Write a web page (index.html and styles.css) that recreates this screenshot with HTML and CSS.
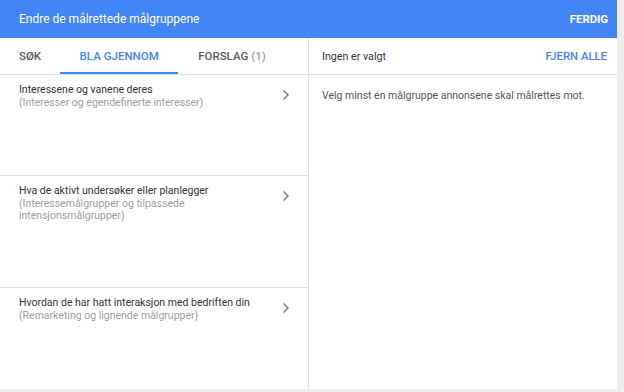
FILE: index.html
```html
<!DOCTYPE html>
<html>
<head>
<meta charset="utf-8">
<link rel="stylesheet" href="styles.css">
</head>
<body>
<div class="dialog">
  <header class="header">
    <div class="title">Endre de målrettede målgruppene</div>
    <div class="done">FERDIG</div>
  </header>
  <div class="body">
    <div class="left">
      <nav class="tabs">
        <div class="tab">SØK</div>
        <div class="tab active">BLA GJENNOM</div>
        <div class="tab">FORSLAG <span class="count">(1)</span></div>
      </nav>
      <div class="row r1">
        <div class="text">
          <div class="rtitle">Interessene og vanene deres</div>
          <div class="rsub">(Interesser og egendefinerte interesser)</div>
        </div>
        <svg class="chev" width="8" height="12" viewBox="0 0 8 12"><path d="M1.5 1.5 L6 6 L1.5 10.5" fill="none" stroke="#757575" stroke-width="1.4"/></svg>
      </div>
      <div class="row r2">
        <div class="text">
          <div class="rtitle">Hva de aktivt undersøker eller planlegger</div>
          <div class="rsub">(Interessemålgrupper og tilpassede<br>intensjonsmålgrupper)</div>
        </div>
        <svg class="chev" width="8" height="12" viewBox="0 0 8 12"><path d="M1.5 1.5 L6 6 L1.5 10.5" fill="none" stroke="#757575" stroke-width="1.4"/></svg>
      </div>
      <div class="row r3">
        <div class="text">
          <div class="rtitle">Hvordan de har hatt interaksjon med bedriften din</div>
          <div class="rsub">(Remarketing og lignende målgrupper)</div>
        </div>
        <svg class="chev" width="8" height="12" viewBox="0 0 8 12"><path d="M1.5 1.5 L6 6 L1.5 10.5" fill="none" stroke="#757575" stroke-width="1.4"/></svg>
      </div>
    </div>
    <div class="right">
      <div class="rhead">
        <div class="none">Ingen er valgt</div>
        <div class="clear">FJERN ALLE</div>
      </div>
      <div class="hint">Velg minst én målgruppe annonsene skal målrettes mot.</div>
    </div>
  </div>
</div>
</body>
</html>
```
FILE: styles.css
```css
html, body {
  margin: 0;
  padding: 0;
  background: #efefef;
  font-family: Roboto, "Liberation Sans", Arial, sans-serif;
}
.dialog {
  width: 617px;
  height: 389px;
  background: #fff;
  display: flex;
  flex-direction: column;
}
.header {
  height: 38px;
  background: #4285f4;
  color: #fff;
  display: flex;
  align-items: center;
  justify-content: space-between;
  padding: 0 9px 0 19px;
  flex-shrink: 0;
}
.title {
  font-size: 12px;
}
.done {
  font-size: 11.3px;
  font-weight: 700;
}
.body {
  flex: 1;
  display: flex;
  min-height: 0;
}
.left {
  width: 308px;
  border-right: 1px solid #e0e0e0;
  display: flex;
  flex-direction: column;
}
.tabs {
  height: 37px;
  display: flex;
  border-bottom: 1px solid #e0e0e0;
  box-sizing: border-box;
}
.tab {
  font-size: 11.5px;
  font-weight: 500;
  color: #5a5a5a;
  display: flex;
  align-items: center;
  box-sizing: border-box;
  height: 36px;
}
.tab:first-child {
  padding-left: 19px;
}
.tab.active {
  color: #4285f4;
  border-bottom: 2px solid #4285f4;
  padding-top: 2px;
  width: 118px;
  justify-content: center;
  margin-left: 19px;
  margin-right: 20px;
}
.count {
  color: #9e9e9e;
  margin-left: 3px;
}
.row {
  display: flex;
  justify-content: space-between;
  align-items: flex-start;
  padding: 9px 18px 0 19px;
  border-bottom: 1px solid #e0e0e0;
  box-sizing: border-box;
}
.r1 { height: 101px; }
.r2 { height: 112px; }
.r3 { flex: 1; border-bottom: none; }
.text {
  font-size: 10.5px;
  line-height: 12.5px;
}
.rtitle {
  color: #333;
}
.rsub {
  color: #9e9e9e;
}
.chev {
  margin-top: 5px;
}
.right {
  flex: 1;
  display: flex;
  flex-direction: column;
}
.rhead {
  height: 37px;
  border-bottom: 1px solid #e0e0e0;
  box-sizing: border-box;
  display: flex;
  align-items: center;
  justify-content: space-between;
  padding: 0 10px 0 13px;
}
.none {
  font-size: 10.7px;
  color: #333;
}
.clear {
  font-size: 11.3px;
  font-weight: 500;
  color: #4285f4;
}
.hint {
  font-size: 10.5px;
  color: #555;
  padding: 14px 13px;
}
```
